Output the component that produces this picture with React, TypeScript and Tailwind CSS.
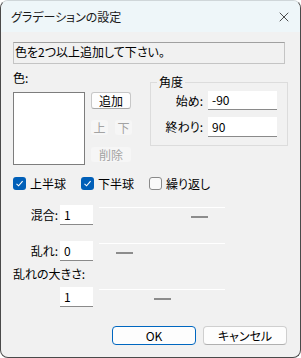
import { X } from "lucide-react";

const jp = "font-['Noto_Sans_CJK_JP',sans-serif]";

function Field({ value, className = "" }: { value: string; className?: string }) {
  return (
    <div
      className={`flex items-center bg-white border-b border-b-[#8a8a8a] pl-[4px] text-[12px] leading-none text-black ${className}`}
    >
      {value}
    </div>
  );
}

function Slider({ at }: { at: number }) {
  // thumb offset comes from the value, so it is inline
  return (
    <div className="relative ml-[6px] h-[20px] w-[126px]">
      <div className="h-[1px] mt-[2px] bg-white" />
      <div
        className="absolute top-[11px] h-[2px] w-[17px] bg-[#8c8c8c]"
        style={{ left: at }}
      />
    </div>
  );
}

function Check({ checked, label }: { checked: boolean; label: string }) {
  return (
    <label className="flex items-center gap-[4px]">
      {checked ? (
        <span className="flex h-[13px] w-[13px] items-center justify-center rounded-[3px] bg-[#005fb8]">
          <svg width="9" height="9" viewBox="0 0 9 9">
            <path d="M1.5 4.8 L3.6 6.8 L7.6 2.2" fill="none" stroke="white" strokeWidth="1.1" />
          </svg>
        </span>
      ) : (
        <span className="h-[13px] w-[13px] rounded-[3px] border border-[#8a8a8a] bg-[#f9f9f9]" />
      )}
      <span>{label}</span>
    </label>
  );
}

export default function App() {
  return (
    <div
      className={`${jp} flex h-[358px] w-[301px] flex-col overflow-hidden rounded-lg border border-[#4a4a4a] border-t-[#cfd6d9] bg-[#f1f1f1] text-[12px] text-black [font-feature-settings:'palt']`}
    >
      <div className="flex h-[31px] shrink-0 items-center justify-between bg-[#eef6f9] pl-[10px] pr-[8px]">
        <span className="text-[12px] text-[#1a1a1a]">グラデーションの設定</span>
        <X size={16} strokeWidth={1.2} className="text-[#222]" />
      </div>

      <div className="ml-[12px] mt-[10px] flex h-[22px] w-[272px] items-start border border-[#c4c4c4] border-t-[#a0a0a0] pl-[1px] pt-[2px] leading-[14px]">
        色を2つ以上追加して下さい。
      </div>

      <div className="mt-[6px] flex">
        <div className="ml-[12px] flex flex-col">
          <span className="h-[16px] leading-[16px]">色:</span>
          <div className="mt-[6px] h-[73px] w-[72px] border border-[#7d7d7d] bg-white" />
        </div>

        <div className="ml-[6px] mt-[22px] flex flex-col">
          <button className="h-[17px] w-[40px] rounded-[3px] border border-[#c7c7c7] border-b-[#a8a8a8] bg-[#fdfdfd] text-[12px] leading-none">
            追加
          </button>
          <div className="mt-[11px] flex gap-[7px]">
            <span className="flex h-[15px] w-[17px] items-center justify-center rounded-[3px] bg-[#f6f6f6] text-[#a3a3a3]">上</span>
            <span className="flex h-[15px] w-[17px] items-center justify-center rounded-[3px] bg-[#f6f6f6] text-[#a3a3a3]">下</span>
          </div>
          <span className="mt-[12px] flex h-[15px] w-[40px] items-center justify-center rounded-[3px] bg-[#f6f6f6] text-[#a3a3a3]">
            削除
          </span>
        </div>

        <div className="relative ml-[18px] mt-[12px] h-[64px] w-[138px] border border-[#dcdcdc]">
          <span className="absolute -top-[8px] left-[6px] bg-[#f1f1f1] px-[2px] leading-[14px]">角度</span>
          <div className="mt-[8px] flex items-center">
            <span className="w-[52px] text-right">始め:</span>
            <Field value="-90" className="ml-[5px] h-[19px] w-[69px]" />
          </div>
          <div className="mt-[7px] flex items-center">
            <span className="w-[52px] text-right">終わり:</span>
            <Field value="90" className="ml-[5px] h-[20px] w-[69px]" />
          </div>
        </div>
      </div>

      <div className="ml-[12px] mt-[12px] flex h-[13px] items-center leading-none">
        <Check checked label="上半球" />
        <div className="ml-[15px]">
          <Check checked label="下半球" />
        </div>
        <div className="ml-[15px]">
          <Check checked={false} label="繰り返し" />
        </div>
      </div>

      <div className="mt-[15px] flex items-start">
        <span className="mt-[2px] w-[57px] text-right leading-[16px]">混合:</span>
        <Field value="1" className="ml-[2px] h-[20px] w-[33px]" />
        <Slider at={92} />
      </div>

      <div className="mt-[16px] flex items-start">
        <span className="mt-[2px] w-[57px] text-right leading-[16px]">乱れ:</span>
        <Field value="0" className="ml-[2px] h-[20px] w-[33px]" />
        <Slider at={17} />
      </div>

      <span className="ml-[12px] mt-[5px] leading-[16px]">乱れの大きさ:</span>
      <div className="mt-[5px] flex items-start">
        <Field value="1" className="ml-[59px] h-[20px] w-[33px]" />
        <Slider at={55} />
      </div>

      <div className="ml-[111px] mt-[19px] flex gap-[7px]">
        <button className="h-[19px] w-[84px] rounded-[4px] border border-[#0067c0] bg-[#fdfdfd] text-[12px] leading-none">
          OK
        </button>
        <button className="h-[19px] w-[84px] rounded-[4px] border border-[#cfcfcf] border-b-[#b0b0b0] bg-[#fdfdfd] text-[12px] leading-none">
          キャンセル
        </button>
      </div>
    </div>
  );
}
